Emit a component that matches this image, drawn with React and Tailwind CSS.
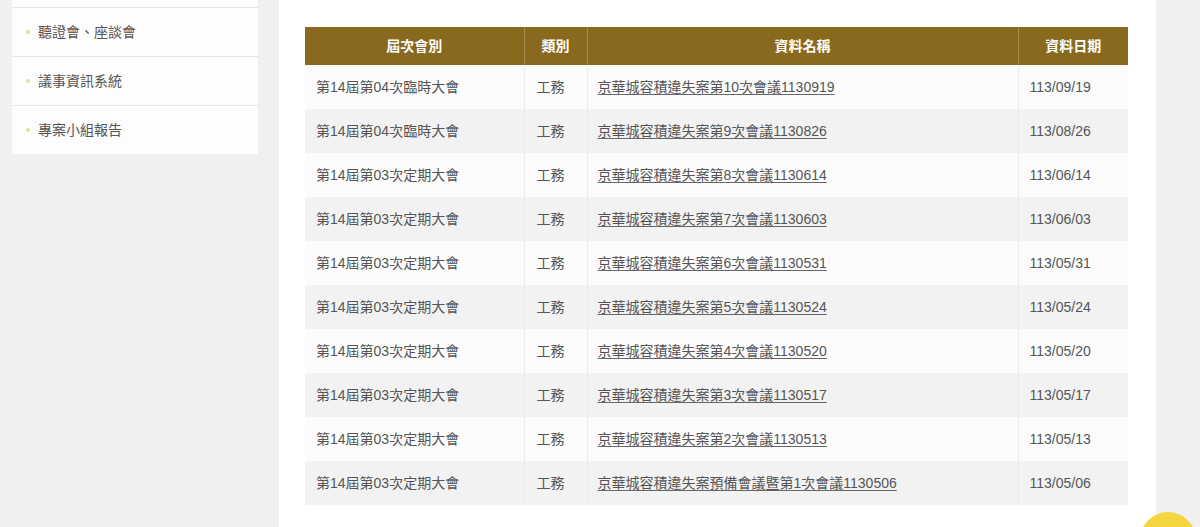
import React from 'react';

const menu = ['聽證會、座談會', '議事資訊系統', '專案小組報告'];

const rows = [
    ['第14屆第04次臨時大會', '京華城容積違失案第10次會議1130919', '113/09/19'],
    ['第14屆第04次臨時大會', '京華城容積違失案第9次會議1130826', '113/08/26'],
    ['第14屆第03次定期大會', '京華城容積違失案第8次會議1130614', '113/06/14'],
    ['第14屆第03次定期大會', '京華城容積違失案第7次會議1130603', '113/06/03'],
    ['第14屆第03次定期大會', '京華城容積違失案第6次會議1130531', '113/05/31'],
    ['第14屆第03次定期大會', '京華城容積違失案第5次會議1130524', '113/05/24'],
    ['第14屆第03次定期大會', '京華城容積違失案第4次會議1130520', '113/05/20'],
    ['第14屆第03次定期大會', '京華城容積違失案第3次會議1130517', '113/05/17'],
    ['第14屆第03次定期大會', '京華城容積違失案第2次會議1130513', '113/05/13'],
    ['第14屆第03次定期大會', '京華城容積違失案預備會議暨第1次會議1130506', '113/05/06'],
];

const App = () => {
    return (
        <div
            className='relative h-[527px] w-[1200px] overflow-hidden bg-[#f0f0f0] pl-[12px] flex gap-[21px]'
            style={{ fontFamily: '"Liberation Sans", "Noto Sans CJK TC", sans-serif' }}
        >
            {/* sidebar */}
            <aside className='w-[246px] shrink-0 self-start'>
                <div className='h-[7px] bg-[#fdfdfd]'></div>
                {menu.map((m) => (
                    <div key={m} className='h-[49px] border-t border-[#e6e6e6] bg-[#fdfdfd] flex items-center pl-[14px] text-[14px] text-[#555]'>
                        <span className='mr-[8px] h-[4px] w-[4px] rounded-full bg-[#dfe48f]'></span>
                        {m}
                    </div>
                ))}
            </aside>

            {/* main */}
            <main className='w-[877px] shrink-0 bg-white pl-[26px] pt-[27px]'>
                <table className='w-[823px] border-collapse text-[14px] text-[#555]'>
                    <thead>
                        <tr className='h-[38px] bg-[#89691d] text-white font-bold'>
                            <th className='w-[219px] border-r border-[#a48a52] font-bold'>屆次會別</th>
                            <th className='w-[63px] border-r border-[#a48a52] font-bold'>類別</th>
                            <th className='w-[431px] border-r border-[#a48a52] font-bold'>資料名稱</th>
                            <th className='font-bold'>資料日期</th>
                        </tr>
                    </thead>
                    <tbody>
                        {rows.map((r, i) => (
                            <tr key={i} className={i % 2 === 0 ? 'h-[44px] bg-[#fcfcfc]' : 'h-[44px] bg-[#f2f2f2]'}>
                                <td className='border-r border-[#ebebeb] pl-[11px]'>{r[0]}</td>
                                <td className='border-r border-[#ebebeb] pl-[12px]'>工務</td>
                                <td className='border-r border-[#ebebeb] pl-[10px]'>
                                    <a className='underline underline-offset-2 decoration-[#666]'>{r[1]}</a>
                                </td>
                                <td className='pl-[11px]'>{r[2]}</td>
                            </tr>
                        ))}
                    </tbody>
                </table>
            </main>

            {/* floating button */}
            <div className='absolute left-[1140px] top-[512px] h-[56px] w-[56px] rounded-full bg-[#f3d640]'></div>
        </div>
    );
};

export default App;
